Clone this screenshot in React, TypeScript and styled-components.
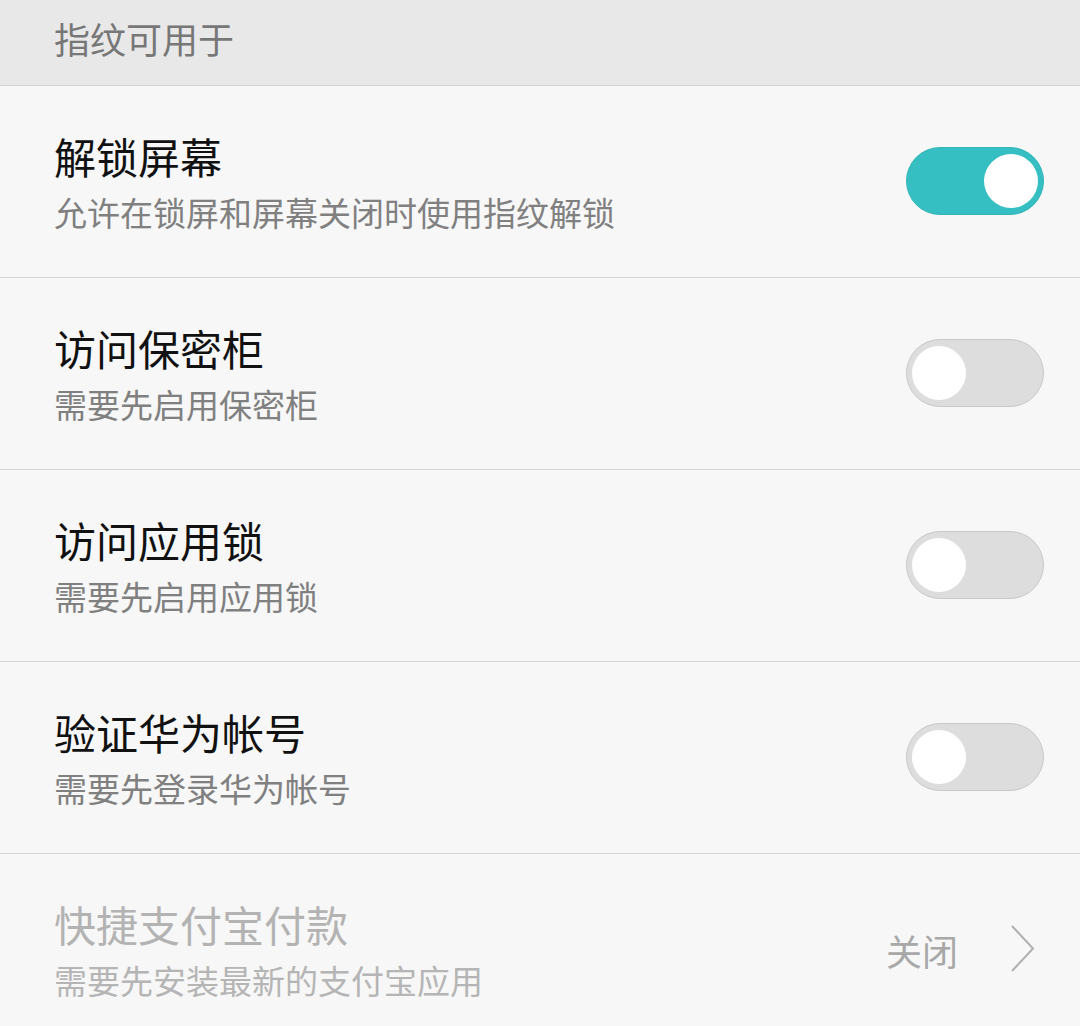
import React from "react";
import styled, { createGlobalStyle } from "styled-components";

const Global = createGlobalStyle`
  html, body { margin: 0; padding: 0; background: #f7f7f7; }
  body { font-family: "Noto Sans CJK SC", "Noto Sans", sans-serif; }
`;

const Page = styled.div`
  width: 1080px;
  background: #f7f7f7;
`;

const Header = styled.div`
  height: 86px;
  background: #e8e8e8;
  border-bottom: 1px solid #d2d2d2;
  display: flex;
  align-items: center;
  padding-left: 54px;
  font-size: 36px;
  color: #777777;
  padding-bottom: 9px;
  box-sizing: border-box;
`;

const Row = styled.div<{ $last?: boolean }>`
  height: 192px;
  box-sizing: border-box;
  border-bottom: ${(p) => (p.$last ? "none" : "1px solid #d6d6d6")};
  display: flex;
  align-items: center;
  padding: 0 36px 0 54px;
`;

const Texts = styled.div`
  flex: 1;
  display: flex;
  flex-direction: column;
  padding-top: 5px;
`;

const Title = styled.div<{ $disabled?: boolean }>`
  font-size: 42px;
  line-height: 56px;
  color: ${(p) => (p.$disabled ? "#b3b3b3" : "#111111")};
`;

const Sub = styled.div<{ $disabled?: boolean }>`
  font-size: 33px;
  line-height: 57px;
  color: ${(p) => (p.$disabled ? "#b5b5b5" : "#808080")};
`;

const Track = styled.div<{ $on: boolean }>`
  width: 138px;
  height: 68px;
  border-radius: 34px;
  box-sizing: border-box;
  background: ${(p) => (p.$on ? "#35bfc3" : "#dddddd")};
  border: 1px solid ${(p) => (p.$on ? "#32b6ba" : "#c9c9c9")};
  display: flex;
  align-items: center;
  justify-content: ${(p) => (p.$on ? "flex-end" : "flex-start")};
  padding: 0 5px;
  margin-top: -2px;
`;

const Knob = styled.div`
  width: 54px;
  height: 54px;
  border-radius: 50%;
  background: #ffffff;
`;

const Value = styled.div`
  display: flex;
  align-items: center;
  gap: 52px;
  font-size: 36px;
  color: #a8a8a8;
  margin-top: 0px;
  margin-right: 8px;
`;

const Toggle = ({ on }: { on: boolean }) => (
  <Track $on={on}>
    <Knob />
  </Track>
);

const rows = [
  { t: "解锁屏幕", s: "允许在锁屏和屏幕关闭时使用指纹解锁", on: true },
  { t: "访问保密柜", s: "需要先启用保密柜", on: false },
  { t: "访问应用锁", s: "需要先启用应用锁", on: false },
  { t: "验证华为帐号", s: "需要先登录华为帐号", on: false },
];

export default function App() {
  return (
    <Page>
      <Global />
      <Header>指纹可用于</Header>
      {rows.map((r) => (
        <Row key={r.t}>
          <Texts>
            <Title>{r.t}</Title>
            <Sub>{r.s}</Sub>
          </Texts>
          <Toggle on={r.on} />
        </Row>
      ))}
      <Row $last>
        <Texts>
          <Title $disabled>快捷支付宝付款</Title>
          <Sub $disabled>需要先安装最新的支付宝应用</Sub>
        </Texts>
        <Value>
          <span>关闭</span>
          <svg width="26" height="52" viewBox="0 0 26 52">
            <path d="M2 2 L23 24.5 L2 47" fill="none" stroke="#b0b0b0" strokeWidth="2" />
          </svg>
        </Value>
      </Row>
    </Page>
  );
}
